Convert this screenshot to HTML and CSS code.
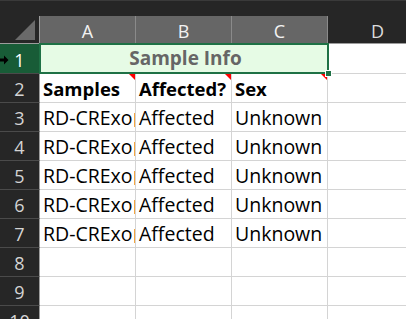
FILE: index.html
```html
<!DOCTYPE html>
<html>
<head>
  <title>Sample Info</title>
  <link rel="stylesheet" href="styles.css">
</head>
<body>
  <div class="sheet">
    <div class="topbar"></div>
    <div class="grid">
      <div class="corner"><span class="corner-tri"></span></div>
      <div class="col-head sel">A</div>
      <div class="col-head sel">B</div>
      <div class="col-head sel">C</div>
      <div class="col-head">D</div>

      <div class="row-head active">
        <svg class="pointer" width="9" height="10" viewBox="0 0 9 10"><path d="M0 3.5h4V0.5L8.5 5 4 9.5V6.5H0z" fill="#000"/></svg>1
      </div>
      <div class="cell merged">Sample Info<span class="handle"></span></div>
      <div class="cell"></div>

      <div class="row-head">2</div>
      <div class="cell bold note">Samples</div>
      <div class="cell bold note">Affected?</div>
      <div class="cell bold note">Sex</div>
      <div class="cell"></div>

      <div class="row-head">3</div>
      <div class="cell clip">RD-CRExo</div>
      <div class="cell">Affected</div>
      <div class="cell">Unknown</div>
      <div class="cell"></div>

      <div class="row-head">4</div>
      <div class="cell clip">RD-CRExo</div>
      <div class="cell">Affected</div>
      <div class="cell">Unknown</div>
      <div class="cell"></div>

      <div class="row-head">5</div>
      <div class="cell clip">RD-CRExo</div>
      <div class="cell">Affected</div>
      <div class="cell">Unknown</div>
      <div class="cell"></div>

      <div class="row-head">6</div>
      <div class="cell clip">RD-CRExo</div>
      <div class="cell">Affected</div>
      <div class="cell">Unknown</div>
      <div class="cell"></div>

      <div class="row-head">7</div>
      <div class="cell clip">RD-CRExo</div>
      <div class="cell">Affected</div>
      <div class="cell">Unknown</div>
      <div class="cell"></div>

      <div class="row-head">8</div>
      <div class="cell"></div><div class="cell"></div><div class="cell"></div><div class="cell"></div>

      <div class="row-head">9</div>
      <div class="cell"></div><div class="cell"></div><div class="cell"></div><div class="cell"></div>

      <div class="row-head">10</div>
      <div class="cell"></div><div class="cell"></div><div class="cell"></div><div class="cell"></div>
    </div>
  </div>
</body>
</html>
```

FILE: styles.css
```css
/* spreadsheet in dark mode */
* {
  box-sizing: border-box;
}
body {
  margin: 0;
  background-color: #fff;
  font-family: "Open Sans", sans-serif;
  overflow: hidden;
}
.sheet {
  width: 406px;
  height: 319px;
  overflow: hidden;
}
.topbar {
  height: 16px;
  background-color: #262626;
  border-top: 1px solid #3a3a3a;
}
.grid {
  display: grid;
  grid-template-columns: 40px 96px 96px 96px 100px;
  grid-template-rows: 28px 30px repeat(9, 29px);
}
.corner {
  position: relative;
  background-color: #262626;
  border-right: 1px solid #9c9c9c;
  border-bottom: 1px solid #9c9c9c;
}
.corner-tri {
  position: absolute;
  right: 4px;
  bottom: 3px;
  width: 0;
  height: 0;
  border-left: 20px solid transparent;
  border-bottom: 20px solid #6a6a6a;
}
.col-head {
  display: flex;
  align-items: center;
  justify-content: center;
  padding-top: 2px;
  background-color: #262626;
  color: #dcdcdc;
  font-size: 18px;
  border-right: 1px solid #3a3a3a;
  border-bottom: 1px solid #9c9c9c;
}
.col-head.sel {
  background-color: #666;
  color: #f2f2f2;
  border-right: 1px solid #8a8a8a;
  border-bottom: 1px solid #1e7145;
}
.row-head {
  position: relative;
  display: flex;
  align-items: center;
  justify-content: center;
  padding-top: 2px;
  background-color: #262626;
  color: #d4d4d4;
  font-size: 18px;
  border-right: 1px solid #9c9c9c;
  border-bottom: 1px solid #4a4a4a;
}
.row-head.active {
  background-color: #185c37;
  color: #fff;
  border-right: 1px solid #1e7145;
}
.pointer {
  position: absolute;
  left: 0;
  top: 11px;
}
.cell {
  position: relative;
  display: flex;
  align-items: flex-end;
  padding: 0 0 2px 3px;
  color: #000;
  font-size: 19.5px;
  line-height: 22px;
  white-space: nowrap;
  overflow: hidden;
  border-right: 1px solid #d4d4d4;
  border-bottom: 1px solid #d4d4d4;
}
.cell.bold {
  font-weight: bold;
  font-size: 18.5px;
  padding-bottom: 2px;
}
.cell.clip::after {
  content: "";
  position: absolute;
  right: 0;
  bottom: 4px;
  width: 1px;
  height: 14px;
  background-color: #f4a640;
}
.cell.merged {
  grid-column: span 3;
  justify-content: center;
  align-items: center;
  overflow: visible;
  margin: -1px -1px 0 -1px;
  background-color: #e6fbe5;
  color: #666;
  font-weight: bold;
  font-size: 19px;
  border: 2px solid #1e7145;
}
.handle {
  position: absolute;
  right: -5px;
  bottom: -5px;
  width: 7px;
  height: 7px;
  background-color: #1e7145;
  border: 1px solid #fff;
  z-index: 2;
}
.cell.note::after {
  content: "";
  position: absolute;
  top: 0;
  right: 0;
  border-left: 6px solid transparent;
  border-top: 6px solid #f00;
}
```
